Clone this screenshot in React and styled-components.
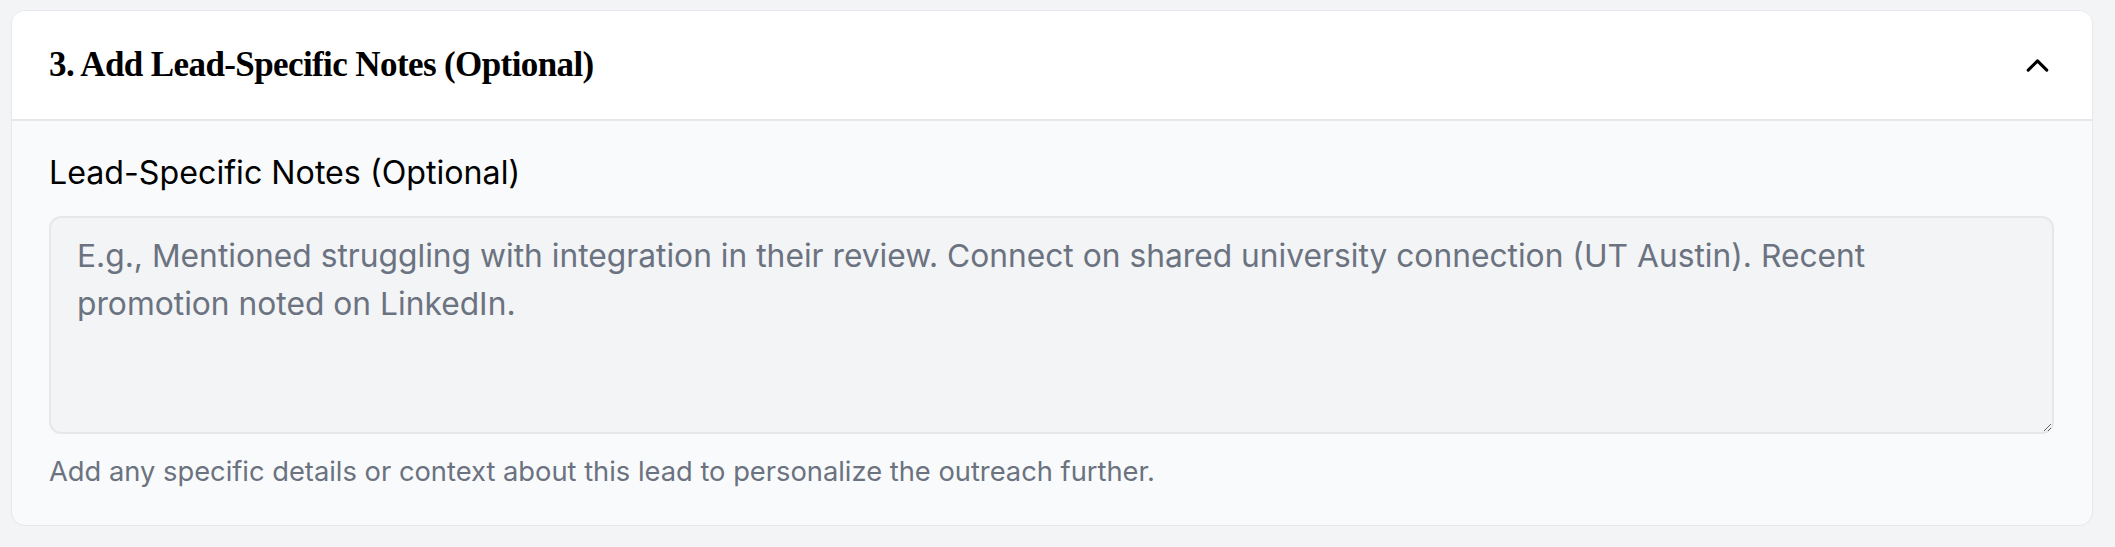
import React from 'react';
import styled, { createGlobalStyle } from 'styled-components';

const GlobalStyle = createGlobalStyle`
  body {
    margin: 0;
    background-color: #f3f4f6;
    font-family: Inter, "Noto Sans", sans-serif;
  }
`;

const Page = styled.div`
  padding: 10px 22px 20px 11px;
`;

const Card = styled.section`
  border: 1px solid #e5e7eb;
  border-radius: 14px;
  background-color: #f9fafb;
  overflow: hidden;
`;

const Header = styled.button`
  display: flex;
  align-items: center;
  justify-content: space-between;
  width: 100%;
  height: 110px;
  padding: 0 36px 0 37px;
  border: none;
  border-bottom: 2px solid #e5e7eb;
  background-color: #ffffff;
  cursor: pointer;
  text-align: left;
`;

const Title = styled.h3`
  margin: 0;
  font-family: "Liberation Serif", "Times New Roman", serif;
  font-weight: 700;
  font-size: 35px;
  letter-spacing: -0.6px;
  color: #000;
`;

const Body = styled.div`
  display: flex;
  flex-direction: column;
  padding: 32px 38px 35px 37px;
`;

const Label = styled.label`
  font-size: 32.2px;
  font-weight: 400;
  color: #000;
  line-height: 40px;
  margin-bottom: 23px;
`;

const TextArea = styled.textarea`
  box-sizing: border-box;
  width: 100%;
  height: 218px;
  padding: 14px 56px 14px 26px;
  border: 2px solid #e5e7eb;
  border-radius: 12px;
  background-color: #f3f4f6;
  font-family: Inter, "Noto Sans", sans-serif;
  font-size: 31.75px;
  line-height: 48px;
  color: #111827;
  resize: vertical;
  outline: none;

  &::placeholder {
    color: #6b7280;
  }
`;

const Hint = styled.p`
  margin: 20px 0 0;
  font-size: 27.3px;
  line-height: 36px;
  color: #6b7280;
`;

function ChevronUp() {
  return (
    <svg width="37" height="37" viewBox="0 0 24 24" fill="none" stroke="#000" strokeWidth="2" strokeLinecap="round" strokeLinejoin="round">
      <path d="m18 15-6-6-6 6" />
    </svg>
  );
}

export default function App() {
  const [open, setOpen] = React.useState(true);

  return (
    <Page>
      <GlobalStyle />
      <Card>
        <Header onClick={() => setOpen(!open)}>
          <Title>3. Add Lead-Specific Notes (Optional)</Title>
          <ChevronUp />
        </Header>
        {open && (
          <Body>
            <Label htmlFor="lead-notes">Lead-Specific Notes (Optional)</Label>
            <TextArea
              id="lead-notes"
              placeholder="E.g., Mentioned struggling with integration in their review. Connect on shared university connection (UT Austin). Recent promotion noted on LinkedIn."
            />
            <Hint>Add any specific details or context about this lead to personalize the outreach further.</Hint>
          </Body>
        )}
      </Card>
    </Page>
  );
}
